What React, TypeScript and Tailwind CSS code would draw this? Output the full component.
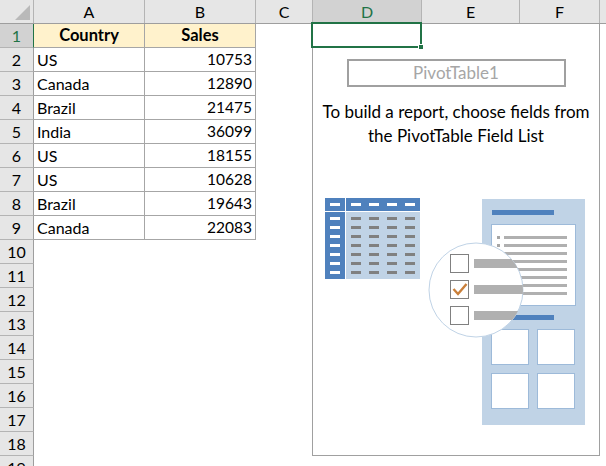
const FONT = "font-['Lato','Noto_Sans',sans-serif]";

const cols = [
  { n: 'A', w: 'w-[111px]', sel: false },
  { n: 'B', w: 'w-[111px]', sel: false },
  { n: 'C', w: 'w-[57px]', sel: false },
  { n: 'D', w: 'w-[109px]', sel: true },
  { n: 'E', w: 'w-[98px]', sel: false },
  { n: 'F', w: 'w-[80px]', sel: false },
  { n: '', w: 'flex-1', sel: false },
];

const data: [string, string][] = [
  ['US', '10753'],
  ['Canada', '12890'],
  ['Brazil', '21475'],
  ['India', '36099'],
  ['US', '18155'],
  ['US', '10628'],
  ['Brazil', '19643'],
  ['Canada', '22083'],
];

const rowNums = Array.from({ length: 19 }, (_, i) => i + 1);

function Illustration() {
  const blue = '#4f81bd';
  const light = '#c0d3e6';
  const edge = '#9dbad9';
  const grey = '#808080';
  const dashXs = [351, 369, 387, 405];
  const rowYs = [217, 226, 235, 244, 253, 262, 271];
  const lineYs = [236, 244, 252, 260, 268, 276, 284, 292];
  return (
    <svg viewBox="320 190 270 240" width="270" height="240" className="block" shapeRendering="crispEdges">
      <defs>
        <clipPath id="lens">
          <circle cx="476" cy="290" r="47" />
        </clipPath>
      </defs>
      <rect x="325" y="198" width="20" height="13" fill={blue} />
      <rect x="346" y="198" width="74" height="13" fill={blue} />
      <rect x="325" y="212" width="20" height="67" fill={blue} />
      <rect x="346" y="212" width="74" height="67" fill={light} />
      <rect x="330" y="203" width="10" height="3" fill="#fff" />
      {dashXs.map((x) => (
        <rect key={x} x={x} y="203" width="10" height="3" fill="#fff" />
      ))}
      {rowYs.map((y) => (
        <g key={y}>
          <rect x="330" y={y} width="10" height="3" fill="#fff" />
          {dashXs.map((x) => (
            <rect key={x} x={x} y={y} width="10" height="3" fill={grey} />
          ))}
        </g>
      ))}

      <rect x="482" y="199" width="103" height="226" fill={light} />
      <rect x="492" y="210" width="62" height="5" fill={blue} />
      <rect x="491.5" y="224.5" width="84" height="81" fill="#fff" stroke={edge} />
      {lineYs.map((y) => (
        <g key={y}>
          <rect x="497" y={y} width="3" height="3" fill="#a6a6a6" />
          <rect x="504" y={y} width="63" height="3" fill="#b0b0b0" />
        </g>
      ))}
      <rect x="492" y="315" width="62" height="5" fill={blue} />
      <rect x="491.5" y="329.5" width="37" height="35" fill="#fff" stroke={edge} />
      <rect x="537.5" y="329.5" width="37" height="35" fill="#fff" stroke={edge} />
      <rect x="491.5" y="373.5" width="37" height="35" fill="#fff" stroke={edge} />
      <rect x="537.5" y="373.5" width="37" height="35" fill="#fff" stroke={edge} />

      <circle cx="476" cy="290" r="47" fill="#fff" stroke={light} strokeWidth="1" shapeRendering="auto" />
      <rect x="450.5" y="254.5" width="18" height="18" fill="#fff" stroke={grey} />
      <rect x="450.5" y="280.5" width="18" height="18" fill="#fff" stroke={grey} />
      <rect x="450.5" y="306.5" width="18" height="18" fill="#fff" stroke={grey} />
      <path d="M453.5 289 L458 294 L466.5 284" fill="none" stroke="#c97f3a" strokeWidth="2.4" shapeRendering="auto" />
      <g clipPath="url(#lens)">
        <rect x="474" y="259" width="50" height="9" fill="#b0b0b0" />
        <rect x="474" y="285" width="50" height="9" fill="#b0b0b0" />
        <rect x="474" y="311" width="50" height="9" fill="#b0b0b0" />
      </g>
    </svg>
  );
}

export default function App() {
  return (
    <div className={`relative h-[466px] w-[606px] overflow-hidden bg-white text-[16px] text-black ${FONT}`}>
      <div className="flex h-6 border-b border-[#9e9e9e] bg-[#e6e6e6]">
        <div className="relative w-[34px] shrink-0 border-r border-[#b4b4b4]">
          <div className="absolute left-[15px] top-[5px] h-0 w-0 border-b-[15px] border-l-[15px] border-b-[#b9b9b9] border-l-transparent" />
        </div>
        {cols.map((c) => (
          <div
            key={c.n || 'g'}
            className={`${c.w} flex items-center justify-center ${c.n === '' ? '' : 'border-r border-[#b4b4b4]'} ${c.sel ? 'bg-[#d2d2d2] text-[#217346]' : ''}`}
          >
            {c.n}
          </div>
        ))}
      </div>

      <div className="flex">
        <div className="w-[34px] shrink-0">
          {rowNums.map((n) => (
            <div
              key={n}
              className={`flex h-6 items-center justify-center border-b border-r border-b-[#b4b4b4] ${n === 1 ? 'border-r-[#217346] bg-[#d2d2d2] text-[#217346]' : 'border-r-[#9e9e9e] bg-[#e6e6e6]'}`}
            >
              {n}
            </div>
          ))}
        </div>
        <div>
          <div className="grid grid-cols-[111px_111px]">
            <div className="flex h-6 items-center justify-center border-b border-r border-[#a6a6a6] bg-[#fff2cc] text-[16.5px] font-bold">Country</div>
            <div className="flex h-6 items-center justify-center border-b border-r border-[#a6a6a6] bg-[#fff2cc] text-[16.5px] font-bold">Sales</div>
            {data.map(([c, s], i) => (
              <div key={i} className="contents">
                <div className="flex h-6 items-center border-b border-r border-[#a6a6a6] pl-[3px]">{c}</div>
                <div className="flex h-6 items-center justify-end border-b border-r border-[#a6a6a6] pr-[3px] text-[15.5px]">{s}</div>
              </div>
            ))}
          </div>
        </div>
      </div>

      {/* embedded PivotTable placeholder floating over the sheet */}
      <div className="absolute left-[312px] top-6 flex h-[432px] w-[288px] flex-col items-center border-x border-b border-[#a0a0a0]">
        <div className="mt-[35px] flex h-[28px] w-[219px] items-center justify-center border-2 border-[#a0a0a0] text-[17px] text-[#a6a6a6]">
          PivotTable1
        </div>
        <div className="mt-[13px] text-center text-[17px] leading-[24px]">
          To build a report, choose fields from
          <br />
          the PivotTable Field List
        </div>
        <div className="ml-[7px] mt-[42px] w-[270px] self-start">
          <Illustration />
        </div>
      </div>

      {/* active-cell selection */}
      <div className="absolute left-[311px] top-[22px] h-[26px] w-[111px] border-2 border-[#217346]">
        <div className="absolute bottom-[-4px] right-[-4px] h-[6px] w-[6px] border border-white bg-[#217346]" />
      </div>
    </div>
  );
}
